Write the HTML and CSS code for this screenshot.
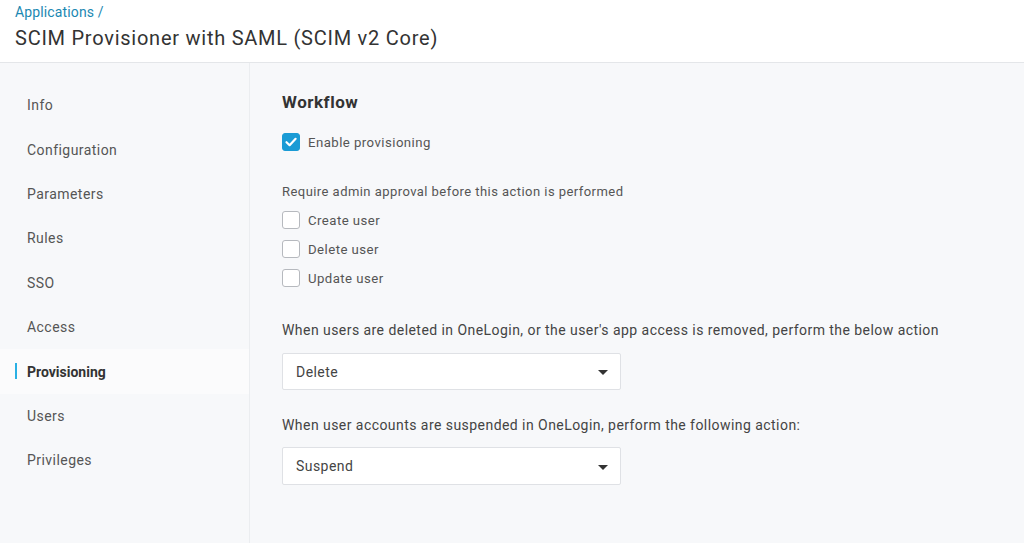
FILE: index.html
```html
<!DOCTYPE html>
<html>
<head>
<meta charset="utf-8">
<link rel="stylesheet" href="styles.css">
</head>
<body>
<header class="header">
  <a class="crumb">Applications /</a>
  <h1 class="title">SCIM Provisioner with SAML (SCIM v2 Core)</h1>
</header>
<div class="body">
  <nav class="side">
    <div class="nav-item">Info</div>
    <div class="nav-item">Configuration</div>
    <div class="nav-item">Parameters</div>
    <div class="nav-item">Rules</div>
    <div class="nav-item">SSO</div>
    <div class="nav-item">Access</div>
    <div class="nav-item active">Provisioning</div>
    <div class="nav-item">Users</div>
    <div class="nav-item">Privileges</div>
  </nav>
  <main class="main">
    <h2 class="section-title">Workflow</h2>
    <label class="check-row first">
      <span class="box checked"><svg viewBox="0 0 18 18" width="18" height="18"><path d="M4.5 9.2 L7.6 12.2 L13.6 5.8" fill="none" stroke="#fff" stroke-width="2.2" stroke-linecap="round" stroke-linejoin="round"/></svg></span>
      <span class="check-label">Enable provisioning</span>
    </label>
    <p class="hint">Require admin approval before this action is performed</p>
    <div class="check-list">
      <label class="check-row"><span class="box"></span><span class="check-label">Create user</span></label>
      <label class="check-row"><span class="box"></span><span class="check-label">Delete user</span></label>
      <label class="check-row"><span class="box"></span><span class="check-label">Update user</span></label>
    </div>
    <p class="field-label">When users are deleted in OneLogin, or the user's app access is removed, perform the below action</p>
    <div class="select"><span>Delete</span><span class="caret"></span></div>
    <p class="field-label second">When user accounts are suspended in OneLogin, perform the following action:</p>
    <div class="select second"><span>Suspend</span><span class="caret"></span></div>
  </main>
</div>
</body>
</html>
```
FILE: styles.css
```css
* { box-sizing: border-box; }
html, body { margin: 0; padding: 0; height: 100%; }
body {
  font-family: Roboto, "Liberation Sans", Arial, sans-serif;
  color: #333;
  background: #f7f8fa;
  display: flex;
  flex-direction: column;
  overflow: hidden;
  letter-spacing: 0.028em;
}
.header {
  background: #fff;
  height: 63px;
  border-bottom: 1px solid #e4e6e9;
  padding: 3px 15px 0;
  flex: none;
}
.crumb {
  display: block;
  color: #1b88b2;
  font-size: 14px;
  line-height: 18px;
  letter-spacing: 0.01em;
}
.title {
  margin: 4px 0 0;
  font-weight: 400;
  font-size: 20px;
  line-height: 26px;
  color: #333;
  letter-spacing: 0.75px;
}
.body {
  flex: 1;
  display: flex;
}
.side {
  width: 250px;
  flex: none;
  border-right: 1px solid #ebedf0;
  padding-top: 20px;
}
.nav-item {
  height: 44.4px;
  display: flex;
  align-items: center;
  padding-left: 27px;
  font-size: 14px;
  color: #555;
  position: relative;
}
.nav-item.active {
  background: #fbfbfc;
  font-weight: 700;
  color: #333;
  letter-spacing: 0;
}
.nav-item.active::before {
  content: "";
  position: absolute;
  left: 15px;
  top: 14px;
  width: 2px;
  height: 16px;
  background: #2ab0e4;
}
.main {
  flex: 1;
  padding: 29px 0 0 32px;
}
.section-title {
  margin: 0;
  font-size: 17px;
  font-weight: 700;
  line-height: 20px;
  color: #333;
  letter-spacing: 0.03em;
}
.check-row {
  display: flex;
  align-items: center;
  gap: 8px;
  height: 18px;
}
.check-row.first { margin-top: 21px; }
.box {
  width: 18px;
  height: 18px;
  border: 1px solid #b6b9be;
  border-radius: 3px;
  background: #fff;
  flex: none;
  display: flex;
}
.box.checked {
  background: #1a9bd5;
  border-color: #1a9bd5;
}
.box svg { margin: -1px; }
.check-label {
  font-size: 13.2px;
  color: #555;
}
.hint {
  margin: 33px 0 0;
  font-size: 13px;
  line-height: 16px;
  color: #555;
}
.check-list {
  margin-top: 11px;
  display: flex;
  flex-direction: column;
  gap: 11px;
}
.field-label {
  margin: 34px 0 0;
  font-size: 14px;
  line-height: 18px;
  color: #444;
}
.field-label.second { margin-top: 26px; }
.select {
  margin-top: 14px;
  width: 339px;
  height: 37px;
  background: #fff;
  border: 1px solid #dfe1e5;
  border-radius: 2px;
  display: flex;
  align-items: center;
  justify-content: space-between;
  padding: 0 12px 0 13px;
  font-size: 14px;
  color: #444;
}
.select.second { margin-top: 13px; height: 38px; }
.caret {
  width: 0;
  height: 0;
  border-left: 5px solid transparent;
  border-right: 5px solid transparent;
  border-top: 5px solid #333;
  margin-top: 2px;
}
```
